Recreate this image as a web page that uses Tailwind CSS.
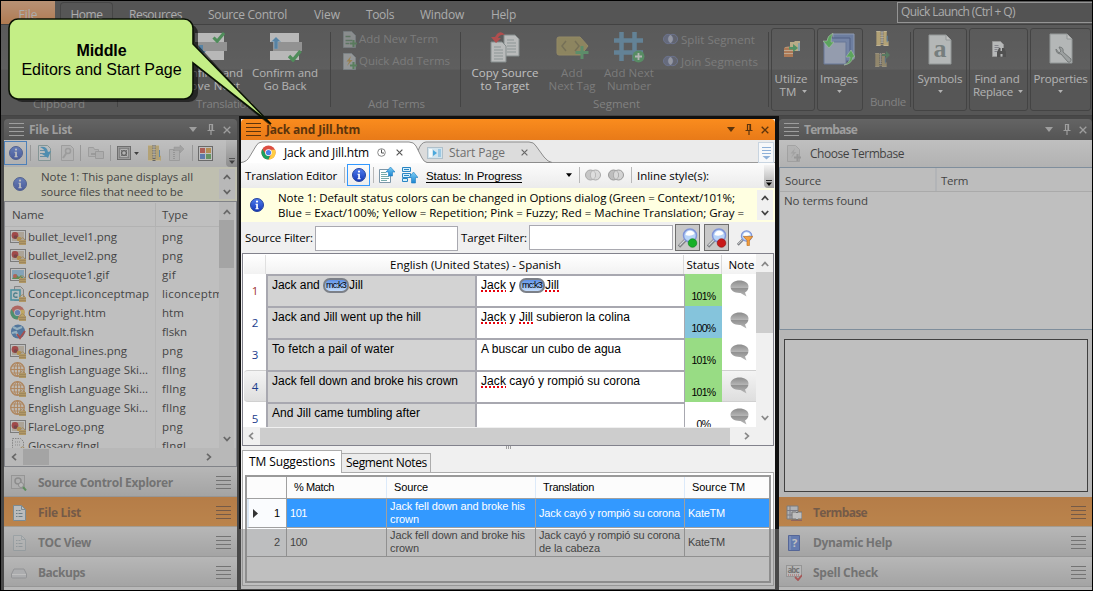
<!DOCTYPE html>
<html lang="en">
<head>
<meta charset="utf-8">
<title>Translation workspace</title>
<script src="https://cdn.jsdelivr.net/npm/@tailwindcss/browser@4"></script>
</head>
<body class="w-[1093px] h-[591px] overflow-hidden bg-[#101010] font-['Open_Sans',sans-serif] text-[11.5px] leading-[13px] text-black">

<svg class="absolute w-0 h-0">
  <defs>
    <linearGradient id="gBlue" x1="0" y1="0" x2="0" y2="1"><stop offset="0" stop-color="#4f7df0"/><stop offset="1" stop-color="#1436b4"/></linearGradient>
    <linearGradient id="gBub" x1="0" y1="0" x2="0" y2="1"><stop offset="0" stop-color="#8c8c8c"/><stop offset=".45" stop-color="#b4b4b4"/><stop offset=".5" stop-color="#929292"/><stop offset="1" stop-color="#b8b8b8"/></linearGradient>
    <linearGradient id="gSky" x1="0" y1="0" x2="0" y2="1"><stop offset="0" stop-color="#7fd0f7"/><stop offset="1" stop-color="#1b85d0"/></linearGradient>
  </defs>
  <symbol id="burger" viewBox="0 0 15 13"><path d="M0 .5h15M0 4.5h15M0 8.5h15M0 12.5h15" stroke="currentColor"/></symbol>
  <symbol id="caret" viewBox="0 0 8 5"><path d="M0 0h8L4 5z" fill="currentColor"/></symbol>
  <symbol id="pin" viewBox="0 0 8 11"><path d="M2.5 6V.5h3V6M5 .5V6M.5 6.5h7M4 7v4" fill="none" stroke="currentColor" stroke-width="1.2"/></symbol>
  <symbol id="x" viewBox="0 0 8 8"><path d="M.7.7l6.6 6.6M7.3.7L.7 7.3" stroke="currentColor" stroke-width="1.3"/></symbol>
  <symbol id="up" viewBox="0 0 8 6"><path d="M.8 5L4 1.6 7.2 5" fill="none" stroke="currentColor" stroke-width="1.7"/></symbol>
  <symbol id="down" viewBox="0 0 8 6"><path d="M.8 1L4 4.4 7.2 1" fill="none" stroke="currentColor" stroke-width="1.7"/></symbol>
  <symbol id="left" viewBox="0 0 6 8"><path d="M5 .8L1.6 4 5 7.2" fill="none" stroke="currentColor" stroke-width="1.7"/></symbol>
  <symbol id="right" viewBox="0 0 6 8"><path d="M1 .8L4.4 4 1 7.2" fill="none" stroke="currentColor" stroke-width="1.7"/></symbol>
  <symbol id="info" viewBox="0 0 14 14"><circle cx="7" cy="7" r="6.5" fill="url(#gBlue)" stroke="#27459c"/><circle cx="7" cy="3.6" r="1.1" fill="#fff"/><path d="M5.5 5.8h2.4v4.4h.8v1H5.4v-1h.8V6.8h-.7z" fill="#fff"/></symbol>
  <symbol id="over" viewBox="0 0 7 7"><path d="M0 .5h7" stroke="currentColor"/><path d="M0 3h7L3.5 7z" fill="currentColor"/></symbol>
  <symbol id="doc" viewBox="0 0 13 16"><path d="M.5.5h8l4 4v11H.5z" fill="#f4f8fa" stroke="#7796a6"/><path d="M8.500.5v4h4" fill="none" stroke="#7796a6"/><path d="M3 5.500h1.500M5.500 5.500h2M3 8.500h1.500M5.500 8.500h4M3 11.500h1.500M5.500 11.500h4" stroke="#5a7c8d"/></symbol>
  <symbol id="zip" viewBox="0 0 13 16"><path d="M0 0h11v10l2 1v5H0z" fill="#e7c46d"/><path d="M0 .5h11M0 15.500h12.500" stroke="#ffe9b0"/><path d="M6 0v16" stroke="#4c4c4c" stroke-width="3" stroke-dasharray="1.500 1"/><path d="M6 0v13" stroke="#eee" stroke-width="1"/><path d="M11.500 5v7" stroke="#3f8fd0"/></symbol>
  <symbol id="chrome" viewBox="0 0 16 16"><circle cx="8" cy="8" r="7.500" fill="#dd4f43"/><path d="M8 15.500A7.500 7.500 0 0 1 1.500 4.200L5 10a3.500 3.500 0 0 0 4.500 1z" fill="#1aa15f"/><path d="M8 15.500L11 10V5h4A7.500 7.500 0 0 1 8 15.500z" fill="#ffce44"/><circle cx="8" cy="8" r="3.600" fill="#fff"/><circle cx="8" cy="8" r="2.800" fill="#4a80e8"/></symbol>
  <symbol id="lock" viewBox="0 0 7 8"><path d="M1.500 3V2Q3.500-.5 5.500 2v1" fill="none" stroke="#c49a4a"/><rect y="3" width="7" height="5" fill="#e0b04c"/><path d="M0 4.500h7M0 6.500h7" stroke="#b08030" stroke-width=".7"/></symbol>
  <symbol id="img" viewBox="0 0 16 16"><rect x=".5" y="1.500" width="15" height="12" fill="#fff" stroke="#777"/><rect x="2" y="3" width="12" height="9" fill="#d8c8b0"/><circle cx="5" cy="6.500" r="3.400" fill="#c21414"/><circle cx="5.500" cy="8" r="1.800" fill="#6b1010"/><circle cx="9" cy="10" r="2.300" fill="#e8a01a"/><use href="#lock" x="9" y="8" width="7" height="8"/></symbol>
  <symbol id="gif" viewBox="0 0 16 16"><rect x=".5" y="1.500" width="15" height="12" fill="#fff" stroke="#777"/><rect x="2" y="3" width="12" height="9" fill="#8ac6f0"/><path d="M2 12l4-5 3 3 2-2 3 4z" fill="#3f9a28"/><circle cx="5" cy="9" r="2" fill="#e0442c"/><use href="#lock" x="9" y="8" width="7" height="8"/></symbol>
  <symbol id="concept" viewBox="0 0 16 16"><path d="M4.500.5h6l3 3v11h-9z" fill="#eee" stroke="#888"/><rect x="1" y="4" width="9" height="10" fill="#e8fbff" stroke="#1ca0bd" stroke-width="1.600"/><path d="M7.500 7.500Q4 6 3.700 9t3.800 2" fill="none" stroke="#147a92" stroke-width="1.300"/><use href="#lock" x="9" y="8" width="7" height="8"/></symbol>
  <symbol id="chromef" viewBox="0 0 16 16"><use href="#chrome" width="15" height="15"/><use href="#lock" x="9" y="8" width="7" height="8"/></symbol>
  <symbol id="skin" viewBox="0 0 16 16"><circle cx="8" cy="7.500" r="7" fill="#246cb8"/><path d="M3 3l4 2 5-2M2 9l4-1 2 4" stroke="#a8e0ff" stroke-width="2.200" fill="none"/><path d="M7 10l3 4 5-7" fill="none" stroke="#c81e1e" stroke-width="2"/></symbol>
  <symbol id="globe" viewBox="0 0 16 16"><circle cx="7.500" cy="7.500" r="6.800" fill="#fdf0e0" stroke="#dd8a3a" stroke-width="1.300"/><path d="M7.500 1v13M1 7.500h13M2 4h11M2 11h11" stroke="#dd8a3a" stroke-width=".9"/><ellipse cx="7.500" cy="7.500" rx="3.300" ry="6.600" fill="none" stroke="#dd8a3a" stroke-width=".9"/><use href="#lock" x="9" y="8" width="7" height="8"/></symbol>
  <symbol id="gloss" viewBox="0 0 16 16"><path d="M2.500.5h8l3 3v12h-11z" fill="#fafafa" stroke="#888" stroke-dasharray="1.500 1"/><path d="M5 4h5M5 7h5" stroke="#999" stroke-dasharray="1 1"/><use href="#lock" x="9" y="8" width="7" height="8"/></symbol>
  <symbol id="circ" viewBox="0 0 16 12"><circle cx="5.500" cy="6" r="5" fill="currentColor" fill-opacity=".6" stroke="currentColor"/><circle cx="10.500" cy="6" r="5" fill="currentColor" fill-opacity=".35" stroke="currentColor"/><path d="M8 1.700a5 5 0 0 1 0 8.600a5 5 0 0 1 0-8.600" fill="#fff" fill-opacity=".5"/></symbol>
  <symbol id="safe" viewBox="0 0 15 15"><rect x=".5" y=".5" width="14" height="14" fill="#bbb" stroke="#555"/><rect x="2.500" y="2.500" width="10" height="10" fill="#e6e6e6" stroke="#777"/><circle cx="7.500" cy="7.500" r="2.600" fill="none" stroke="#444" stroke-width="1.400"/><path d="M4 4l2 2M11 4L9 6M4 11l2-2M11 11L9 9" stroke="#555"/></symbol>
  <symbol id="lens" viewBox="0 0 20 20"><path d="M1 18.500l7-7" stroke="#7e8084" stroke-width="3.200"/><path d="M1.500 17.500l6-6" stroke="#d8dade" stroke-width="1.200"/><circle cx="12" cy="7.500" r="6.500" fill="#b8d4f8" stroke="#8095d8" stroke-width="1.500"/><path d="M7.500 7Q12 9 16.500 6Q15.500 2.800 12 2.800T7.500 7" fill="#fff"/></symbol>
  <symbol id="bubble" viewBox="0 0 19 17"><path d="M9.500.5C14.500.5 18.500 3 18.500 6.500 18.500 9.500 17 11.500 15 12.500L16.500 16.500 10.500 13C4.500 13.300.5 10.500.5 6.800S4.500.5 9.500.5z" fill="url(#gBub)"/></symbol>
  <symbol id="check" viewBox="0 0 14 12"><path d="M1 6l4 4L12.500 1" fill="none" stroke="#1e9a35" stroke-width="3.400"/></symbol>
  <symbol id="arr" viewBox="0 0 10 13"><path d="M5 0l5 5H7v8H3V5H0z" fill="#2f86c8" stroke="#8fc8f0" stroke-width=".6"/></symbol>
  <symbol id="plus" viewBox="0 0 8 8"><path d="M4 0v8M0 4h8" stroke="#2f9c3c" stroke-width="2.400"/></symbol>
  <symbol id="term" viewBox="0 0 15 17"><path d="M.5.500h8l4 4v12H.5z" fill="#d4dde0" stroke="#8fa3ab"/><path d="M2.500 5.500h5M2.500 9.500h7M2.500 12.500h4" stroke="#3d8c4c" stroke-width="1.300"/><use href="#plus" x="7" y="9" width="7" height="7"/></symbol>
  <symbol id="bolt" viewBox="0 0 15 17"><path d="M.5.500h8l4 4v12H.5z" fill="#d4dde0" stroke="#8fa3ab"/><path d="M8 3L3.500 8.500h2.700L4 13l5.500-6H6.800z" fill="#e0a01c"/><use href="#plus" x="7" y="9" width="7" height="7"/></symbol>
</svg>

<div class="relative w-[1093px] h-[591px] flex flex-col">

  <!-- menu tabs -->
  <div class="h-[25px] pt-px pl-px flex bg-[#2a2a2a] border-b border-[#050505] text-[#d8d8d8] text-[12px]">
    <div class="w-[54px] h-[23px] bg-gradient-to-b from-[#f0a468] to-[#e07520] flex justify-center pt-[7px] leading-[13px]"><span data-w="19">File</span></div>
    <div class="ml-[5px] mt-px w-[53px] h-[23px] border border-b-0 border-[#0c0c0c] rounded-t-sm bg-[#2d2d2d] pt-[5px] text-center"><span data-w="32">Home</span></div>
    <div class="pt-[7px] pl-[16px] flex leading-[13px]">
      <span class="w-[79px]"><span data-w="53">Resources</span></span>
      <span class="w-[106px]"><span data-w="79">Source Control</span></span>
      <span class="w-[52px]"><span data-w="26">View</span></span>
      <span class="w-[54px]"><span data-w="28">Tools</span></span>
      <span class="w-[71px]"><span data-w="44">Window</span></span>
      <span><span data-w="25">Help</span></span>
    </div>
    <div class="ml-auto mt-px w-[196px] h-[21px] border border-[#a8a8a8] bg-[#262626] pl-[3px] pt-[2px]"><span data-w="114">Quick Launch (Ctrl + Q)</span></div>
  </div>

  <!-- ribbon -->
  <div class="h-[91px] pl-px pr-[2px] flex bg-gradient-to-b from-[#343434] from-0% via-[#3e3e3e] via-49% to-[#2c2c2c] to-50% border-b border-[#080808] text-[#e4e4e4]">
    <div class="w-[117px] h-[75px] mt-[7px] border-r border-[#080808] text-center text-[#838383] pt-[65px]"><span data-w="52">Clipboard</span></div>
    <div class="w-[213px] h-[83px] mt-[7px] relative flex flex-col">
      <div class="flex h-[65px] pl-[59px] gap-[9px] text-center">
        <div class="w-[66px] flex flex-col items-center">
          <svg class="w-[33px] h-[31px] mb-[3px]" viewBox="0 0 33 31"><path d="M1 1h29v9H1zM1 19h29v9H1z" fill="#f0f0f0"/><path d="M4 10h29v9H4z" fill="#a4a4a4"/><use href="#check" x="18" y="0" width="14" height="11"/><path d="M5 13h4v6h3l-5 5-5-5h3z" fill="#2f86c8"/></svg>
          <span data-w="66">Confirm and</span><span data-w="60">Move Next</span>
        </div>
        <div class="w-[66px] flex flex-col items-center">
          <svg class="w-[33px] h-[31px] mb-[3px]" viewBox="0 0 33 31"><path d="M1 1h29v9H1zM1 19h29v9H1z" fill="#f0f0f0"/><path d="M4 10h29v9H4z" fill="#a4a4a4"/><use href="#check" x="19" y="18" width="14" height="12"/><use href="#arr" x="2" y="5" width="10" height="12"/></svg>
          <span data-w="66">Confirm and</span><span data-w="43">Go Back</span>
        </div>
      </div>
      <div class="pl-[78px] text-[#838383]"><span data-w="57">Translation</span></div>
      <div class="absolute right-0 top-0 w-px h-[75px] bg-[#080808]"></div>
    </div>
    <div class="w-[130px] h-[75px] mt-[7px] border-r border-[#080808] pl-[12px] text-[#777]">
      <div class="flex h-[22px] gap-[1px]"><svg class="w-[15px] h-[17px] opacity-60 -mt-px"><use href="#term"/></svg><span><span data-w="79">Add New Term</span></span></div>
      <div class="flex h-[43px] gap-[1px]"><svg class="w-[15px] h-[17px] opacity-70 -mt-px"><use href="#bolt"/></svg><span><span data-w="91">Quick Add Terms</span></span></div>
      <div class="pl-[25px] text-[#838383]"><span data-w="57">Add Terms</span></div>
    </div>
    <div class="w-[308px] h-[75px] mt-[7px] border-r border-[#080808]">
      <div class="flex h-[66px] -mt-px text-[#787878]">
        <div class="ml-[8px] w-[72px] flex flex-col items-center text-white">
          <svg class="w-[30px] h-[32px] mb-[3px]" viewBox="0 0 30 32"><path d="M14 4h11l4 4v17H14z" fill="#f2f6f6" stroke="#8a9a9a"/><path d="M17 9h7M17 12h9M17 15h9M17 18h9M17 21h9" stroke="#9aa"/><path d="M1 11h11l4 4v16H1z" fill="#f2f6f6" stroke="#8a9a9a"/><path d="M4 16h7M4 19h9M4 22h9M4 25h9M4 28h9" stroke="#9aa"/><path d="M15 4Q11-1 7 3L5 6H1l5 6 5-5H8Q10 3 15 4z" fill="#e01c1c"/></svg>
          <span data-w="67">Copy Source</span><span data-w="49">to Target</span>
        </div>
        <div class="ml-[3px] w-[54px] flex flex-col items-center pl-[2px]">
          <svg class="w-[33px] h-[32px] mb-[3px]" viewBox="0 0 33 32"><path d="M1 8q0-2 2-2h21l8 9-7 9H3q-2 0-2-2z" fill="#9a8a40" stroke="#a8944a"/><path d="M10 10l-4 5 4 5M19 10l4 5-4 5" fill="none" stroke="#6c612f" stroke-width="1.500"/><path d="M26 15v13M19.500 21.500h13" stroke="#3a9a54" stroke-width="3"/></svg>
          <span data-w="22">Add</span><span data-w="47">Next Tag</span>
        </div>
        <div class="ml-[2px] w-[58px] flex flex-col items-center">
          <svg class="w-[34px] h-[32px] mb-[3px]" viewBox="0 0 34 32"><path d="M9.500 1v29M22.500 1v29M2 9.500h29M2 21.500h29" stroke="#4684ac" stroke-width="4.500"/><circle cx="26.500" cy="25.500" r="6" fill="#2f9848"/><path d="M26.500 22v7M23 25.500h7" stroke="#e8e8e8" stroke-width="1.800"/></svg>
          <span data-w="50">Add Next</span><span data-w="44">Number</span>
        </div>
        <div class="ml-[5px] flex flex-col gap-[10px] pt-[2px]">
          <div class="flex items-center gap-[3px] h-[12px]"><svg class="w-[15px] h-[12px] text-[#5868a0]"><use href="#circ"/></svg><span data-w="74">Split Segment</span></div>
          <div class="flex items-center gap-[3px] h-[12px]"><svg class="w-[15px] h-[12px] text-[#5868a0]"><use href="#circ"/></svg><span data-w="77">Join Segments</span></div>
        </div>
      </div>
      <div class="pl-[132px] text-[#838383]"><span data-w="47">Segment</span></div>
    </div>
    <div class="flex mt-[3px] ml-[2px] h-[83px] gap-[2px]">
      <div class="w-[44px] border border-[#080808] rounded-[3px] flex flex-col items-center pr-[4px]">
        <svg class="w-[17px] h-[17px] mt-[12px] mb-[14px] ml-[2px]" viewBox="0 0 17 17"><path d="M6 1h4l1-1h5v10H6z" fill="#f0d68e"/><path d="M14 2h2v8h-2z" fill="#8fc1d0"/><ellipse cx="4.500" cy="7" rx="4" ry="1.500" fill="#f2a460"/><path d="M0 7h9v9H0z" fill="#d8722c"/><path d="M0 9.500h9M0 12.500h9" stroke="#ffd0a0"/><path d="M5 6h4V3l5 4-5 4V8.500H5z" fill="#22a34a"/></svg>
        <span data-w="33">Utilize</span><span class="ml-[4px] flex items-center gap-[5px]"><span data-w="17">TM</span><svg class="w-[5px] h-[3px]"><use href="#caret"/></svg></span>
      </div>
      <div class="w-[46px] border border-[#080808] rounded-[3px] flex flex-col items-center pr-[2px]">
        <svg class="w-[32px] h-[33px] mt-[4px] mb-[6px]" viewBox="0 0 32 33"><path d="M10 1h21v25H10z" fill="#5a7cc0" stroke="#9bb4e4"/><path d="M5 5h22v23H5z" fill="#6a8acc" stroke="#24408a"/><path d="M1 9h22v22H1z" fill="#a8b8dc" stroke="#5070b0"/><path d="M10 0Q4 3 4 8H0l6 7 5-6H8Q8 4 10 0zM21 32q6-2 6-8h-4l5-7 4 7h-2q-1 7-9 8z" fill="#36c83a" stroke="#d8f8d8" stroke-width=".6"/></svg>
        <span data-w="38">Images</span><svg class="w-[5px] h-[3px] mt-[5px]"><use href="#caret"/></svg>
      </div>
      <div class="w-[46px] h-[80px] flex flex-col pl-[5px]">
        <svg class="ml-[6px] w-[13px] h-[16px] mt-[3px]"><use href="#zip"/></svg>
        <svg class="ml-[4px] w-[16px] h-[17px] mt-[5px] opacity-60" viewBox="0 0 16 16"><use href="#zip" x="1" y="2" width="12" height="14"/><path d="M8 3h4V0l4 4-4 4V5H8z" fill="#2b9a48"/></svg>
        <span class="mt-[28px] text-[#838383]"><span data-w="36">Bundle</span></span>
      </div>
      <div class="relative w-[54px] border border-[#080808] rounded-[3px] flex flex-col items-center">
        <div class="absolute -left-[4px] top-[3px] w-px h-[75px] bg-[#080808]"></div>
        <svg class="w-[24px] h-[31px] mt-[5px] mb-[7px]" viewBox="0 0 24 31"><path d="M1 1h17l5 5v24H1z" fill="#e8eeee" stroke="#a6b0b0"/><path d="M18 1v5h5" fill="#fff" stroke="#a6b0b0"/><text x="5.500" y="23" font-family="Liberation Serif,serif" font-size="26" font-weight="bold" fill="#6c7c7c" textLength="13">a</text></svg>
        <span data-w="45">Symbols</span><svg class="w-[5px] h-[3px] mt-[5px]"><use href="#caret"/></svg>
      </div>
      <div class="w-[59px] border border-[#080808] rounded-[3px] flex flex-col items-center pr-[3px]">
        <svg class="w-[14px] h-[17px] mt-[12px] mb-[14px] ml-[4px]" viewBox="0 0 14 17"><path d="M.5.500h8l3 3v12H.5z" fill="#eef2f2" stroke="#aaa"/><path d="M2.500 4.500h4M2.500 6.500h5M2.500 8.500h3M2.500 10.500h3" stroke="#889"/><path d="M5 16v-5l2-4h1.500v3h1.500V7h2l2 4v5h-3.500v-3H8.500v3z" fill="#222"/></svg>
        <span data-w="45">Find and</span><span class="ml-[2px] flex items-center gap-[5px]"><span data-w="40">Replace</span><svg class="w-[5px] h-[3px]"><use href="#caret"/></svg></span>
      </div>
      <div class="w-[61px] border border-[#080808] rounded-[3px] flex flex-col items-center">
        <svg class="w-[24px] h-[31px] mt-[4px] mb-[8px]" viewBox="0 0 24 31"><path d="M1 1h17l5 5v24H1z" fill="#e8eeee" stroke="#a6b0b0"/><path d="M18 1v5h5" fill="#fff" stroke="#a6b0b0"/><path d="M7 16q0 5 5 5l7 8q3 1 3-3l-8-7q1-5-4-5l2 4-2 2z" fill="#b8c0c0" stroke="#6c7474"/></svg>
        <span data-w="54">Properties</span><svg class="w-[5px] h-[3px] mt-[5px]"><use href="#caret"/></svg>
      </div>
    </div>
  </div>

  <!-- workspace -->
  <div class="flex h-[475px] pt-[3px] pl-[4px]">

    <!-- file list -->
    <div class="w-[233px] h-[470px] flex flex-col">
      <div class="h-[21px] rounded-t-[4px] bg-gradient-to-b from-[#494949] to-[#2a2a2a] flex items-center pl-[5px] pr-[6px] text-[#bdbdbd] shrink-0">
        <svg class="w-[15px] h-[13px]"><use href="#burger"/></svg><b class="ml-[5px] text-[12px]"><span data-w="43">File List</span></b>
        <svg class="ml-auto w-[8px] h-[5px]"><use href="#caret"/></svg><svg class="ml-[10px] w-[8px] h-[11px]"><use href="#pin"/></svg><svg class="ml-[8px] w-[8px] h-[8px]"><use href="#x"/></svg>
      </div>
      <div class="h-[27px] bg-gradient-to-b from-white to-[#dedede] flex items-center pb-px shrink-0">
        <div class="w-[23px] h-[24px] border border-[#1a80f0] flex items-center justify-center"><svg class="w-[14px] h-[14px]"><use href="#info"/></svg></div>
        <i class="ml-[3px] w-px h-[16px] bg-[#b0b0b0]"></i>
        <svg class="ml-[7px] w-[14px] h-[16px]" viewBox="0 0 14 16"><path d="M.5.5h9l3 3v12H.5z" fill="#f4f8fa" stroke="#8aa"/><path d="M2 5.500h6M2 8.500h8M2 11.500h8" stroke="#4a9ac8"/><path d="M2 2q7-1 8 5l3-1-3 7-6-4 3-1Q7 4 2 2z" fill="#1f9ae0"/></svg>
        <svg class="ml-[9px] w-[13px] h-[16px]" viewBox="0 0 13 16"><path d="M.5.500h9l3 3v12H.5z" fill="#e6e6e6" stroke="#bbb"/><circle cx="7" cy="6" r="2.500" fill="none" stroke="#b8b8b8" stroke-width="1.500"/><path d="M5.500 8L2 13" stroke="#b8b8b8" stroke-width="2"/></svg>
        <i class="ml-[6px] w-px h-[16px] bg-[#b0b0b0]"></i>
        <svg class="ml-[7px] w-[16px] h-[14px]" viewBox="0 0 16 14"><path d="M.5 1.500h5l1 2h4v7H.5z" fill="#e0e0e0" stroke="#bbb"/><path d="M7.500 5.500h8v7h-8z" fill="#dadada" stroke="#b4b4b4"/><path d="M3 8h5" stroke="#aaa" stroke-width="1.500"/></svg>
        <i class="ml-[6px] w-px h-[16px] bg-[#b0b0b0]"></i>
        <svg class="ml-[6px] w-[14px] h-[14px]"><use href="#safe"/></svg>
        <svg class="ml-[3px] w-[5px] h-[3px]"><use href="#caret"/></svg>
        <svg class="ml-[9px] w-[13px] h-[16px]"><use href="#zip"/></svg>
        <svg class="ml-[8px] w-[16px] h-[16px]" viewBox="0 0 16 16"><path d="M.5 4.500h10v11H.5z" fill="#dcdcdc" stroke="#b8b8b8"/><path d="M5 5v10" stroke="#aaa" stroke-width="2" stroke-dasharray="1 1"/><path d="M5 2h6V0l4 4-4 4V5.500H5z" fill="#c4c4c4" stroke="#aaa" stroke-width=".5"/></svg>
        <i class="ml-[7px] w-px h-[16px] bg-[#b0b0b0]"></i>
        <svg class="ml-[5px] w-[15px] h-[15px]" viewBox="0 0 15 15"><rect x=".5" y=".5" width="14" height="14" fill="#fff" stroke="#555"/><path d="M2 2h5v5H2z" fill="#d83a2c"/><path d="M8 2h5v5H8z" fill="#e49a28"/><path d="M2 8h5v5H2z" fill="#3c74d8"/><path d="M8 8h5v5H8z" fill="#4aa844"/></svg>
        <div class="ml-auto w-[11px] h-[27px] mt-px bg-gradient-to-b from-[#f0f0f0] to-[#9a9a9a] rounded-bl flex items-end justify-center pb-[3px]"><svg class="w-[6px] h-[6px]"><use href="#over"/></svg></div>
      </div>
      <div class="h-[34px] bg-[#ffffe1] flex items-center shrink-0">
        <svg class="ml-[9px] w-[14px] h-[14px]"><use href="#info"/></svg>
        <div class="ml-[14px] leading-[15px]"><div><span data-w="152">Note 1: This pane displays all</span></div><div><span data-w="142">source files that need to be</span></div></div>
        <div class="ml-auto mr-[2px] w-[16px] h-[30px] bg-[#f0f0f0] flex flex-col items-center justify-around text-[#444]"><svg class="w-[8px] h-[6px]"><use href="#up"/></svg><svg class="w-[8px] h-[6px]"><use href="#down"/></svg></div>
      </div>
      <div class="h-[266px] border border-[#828790] bg-white flex flex-col shrink-0">
        <div class="flex h-[246px]">
          <div class="w-[214px] overflow-hidden">
            <div class="h-[24px] mt-px border-b border-[#e4e4e4] flex items-center leading-[23px]"><span class="w-[151px] h-full pl-[7px] border-r border-[#e4e4e4]"><span data-w="32">Name</span></span><span class="pl-[6px]"><span data-w="26">Type</span></span></div>
            <div id="files"></div>
          </div>
          <div class="w-[15px] bg-[#f0f0f0] flex flex-col items-center text-[#505050]"><svg class="mt-[7px] w-[8px] h-[6px]"><use href="#up"/></svg><div class="mt-[5px] w-[15px] h-[48px] bg-[#c8c8c8]"></div><svg class="mt-auto mb-[6px] w-[8px] h-[6px]"><use href="#down"/></svg></div>
        </div>
        <div class="grow bg-[#f0f0f0] flex items-center pb-px text-[#505050]"><svg class="ml-[6px] w-[6px] h-[8px]"><use href="#left"/></svg><div class="ml-[6px] w-[26px] h-[16px] bg-[#c8c8c8]"></div><svg class="ml-[157px] w-[6px] h-[8px]"><use href="#right"/></svg></div>
      </div>
      <div id="accL"></div>
    </div>

    <!-- editor -->
    <div class="ml-[4px] w-[534px] h-[470px] flex flex-col bg-[#f0f0f0]">
      <div class="h-[21px] rounded-t-[4px] bg-gradient-to-b from-[#fa8c1e] to-[#e87a18] flex items-center pl-[5px] pr-[6px] text-[#5c340c] shrink-0">
        <svg class="w-[15px] h-[13px]"><use href="#burger"/></svg><b class="ml-[5px] text-[12px]"><span data-w="94">Jack and Jill.htm</span></b>
        <svg class="ml-auto w-[8px] h-[5px]"><use href="#caret"/></svg><svg class="ml-[10px] w-[8px] h-[11px]"><use href="#pin"/></svg><svg class="ml-[8px] w-[8px] h-[8px]"><use href="#x"/></svg>
      </div>
      <div class="relative h-[23px] shrink-0 bg-[#ebebeb]">
        <svg class="absolute inset-0 w-[534px] h-[23px]" viewBox="0 0 534 23"><path d="M0 22.500h534" stroke="#9a9a9a"/><path d="M177 11q3-9 8-9h103q5 0 7 4l8 11q4 5 8 5.500H181z" fill="#dcdcdc" stroke="#8c8c8c"/><path d="M0 22.500Q6 22 9 16l6-10q2-4 6-4h147q5 0 7 4l6 12q2 4 5 4.500V24H0z" fill="#fff"/><path d="M0 22.500Q6 22 9 16l6-10q2-4 6-4h147q5 0 7 4l6 12q2 4 5 4.500" fill="none" stroke="#8c8c8c"/></svg>
        <div class="relative h-full flex items-center pl-[20px] pt-[2px]">
          <svg class="w-[15px] h-[15px]"><use href="#chrome"/></svg><span class="ml-[8px] text-[12px]"><span data-w="85">Jack and Jill.htm</span></span>
          <svg class="ml-[8px] w-[9px] h-[9px]" viewBox="0 0 9 9"><circle cx="4.500" cy="4.500" r="3.800" fill="#fff" stroke="#888"/><path d="M4.500 1.500v3.500h2.500" fill="none" stroke="#555"/></svg>
          <svg class="ml-[10px] w-[7px] h-[7px] text-[#555]"><use href="#x"/></svg>
          <svg class="ml-[24px] w-[16px] h-[12px]" viewBox="0 0 16 12"><rect x=".5" y=".5" width="15" height="11" fill="#d2e4ee" stroke="#b0c0ca"/><path d="M2 2h3v8H2z" fill="#f4fafc"/><path d="M6 3l4 3-4 3z" fill="#4aa8dc"/><path d="M11 2h3v8h-3z" fill="#9cc8e2"/></svg>
          <span class="ml-[6px] text-[12px] text-[#6e6e6e]"><span data-w="56">Start Page</span></span>
          <svg class="ml-[16px] w-[7px] h-[7px] text-[#666]"><use href="#x"/></svg>
          <div class="ml-auto mr-px w-[16px] h-[21px] -mt-px border border-[#c8d4e0] bg-[#f6f8fa] flex justify-center pt-[4px]"><svg class="w-[9px] h-[13px]" viewBox="0 0 9 13"><path d="M0 .5h9M0 3.500h9M0 6.500h9" stroke="#8db0d8"/><path d="M.5 9h8l-4 3.500z" fill="#8db0d8"/></svg></div>
        </div>
      </div>
      <div class="h-[25px] shrink-0 bg-gradient-to-b from-[#fcfcfc] to-[#ebebeb] flex items-center pb-px">
        <span class="ml-[4px]"><span data-w="92">Translation Editor</span></span>
        <i class="ml-[7px] w-px h-[16px] bg-[#b8b8b8]"></i>
        <div class="ml-[2px] w-[23px] h-[22px] border border-[#3399ff] flex items-center justify-center"><svg class="w-[14px] h-[14px]"><use href="#info"/></svg></div>
        <i class="ml-[3px] w-px h-[16px] bg-[#b8b8b8]"></i>
        <svg class="ml-[5px] w-[16px] h-[16px]" viewBox="0 0 16 16"><path d="M.5 2.500h11v13H.5z" fill="#fff" stroke="#7d96a8"/><path d="M2 5.500h5M2 7.500h6M2 9.500h8M2 11.500h8M2 13.500h6" stroke="#7aa"/><path d="M11.500 0l4.500 5h-2.500v4h-4V5H7z" fill="url(#gSky)" stroke="#1f7cc0" stroke-width=".6"/></svg>
        <svg class="ml-[7px] w-[16px] h-[17px]" viewBox="0 0 16 17"><path d="M.5.500h8v4h-8zM.5 6.500h8v4h-8zM.5 11.500h5v3h-5z" fill="#d4f0fc" stroke="#2a86c4"/><path d="M2 2.500h5M2 8.500h5" stroke="#2a86c4"/><path d="M11.500 5l4.500 5.500h-2.500V16h-4v-5.500H7z" fill="url(#gSky)" stroke="#1f7cc0" stroke-width=".6"/></svg>
        <span class="ml-[8px] mt-[2px] w-[96px] h-[13px] border-b border-black font-['Liberation_Sans',sans-serif] leading-[12px] text-[11.5px]"><span data-w="96">Status: In Progress</span></span>
        <svg class="ml-[44px] w-[6px] h-[4px]"><use href="#caret"/></svg>
        <i class="ml-[7px] w-px h-[16px] bg-[#b8b8b8]"></i>
        <svg class="ml-[5px] w-[16px] h-[12px] text-[#a8a8a8]"><use href="#circ"/></svg>
        <svg class="ml-[7px] w-[16px] h-[12px] text-[#999]"><use href="#circ"/></svg>
        <i class="ml-[7px] w-px h-[16px] bg-[#b8b8b8]"></i>
        <span class="ml-[5px]"><span data-w="72">Inline style(s):</span></span>
        <div class="ml-auto mr-px mt-[2px] w-[10px] h-[23px] bg-gradient-to-b from-[#f4f4f4] to-[#a6a6a6] rounded-bl flex items-end justify-center pb-[2px]"><svg class="w-[6px] h-[6px]"><use href="#over"/></svg></div>
      </div>
      <div class="h-[34px] shrink-0 bg-[#ffffe1] flex items-center">
        <svg class="ml-[9px] w-[14px] h-[14px]"><use href="#info"/></svg>
        <div class="ml-[14px] leading-[15px]"><div><span data-w="457">Note 1: Default status colors can be changed in Options dialog (Green = Context/101%;</span></div><div><span data-w="466">Blue = Exact/100%; Yellow = Repetition; Pink = Fuzzy; Red = Machine Translation; Gray =</span></div></div>
        <div class="ml-auto mr-[2px] w-[16px] h-[30px] bg-[#f0f0f0] flex flex-col items-center justify-around text-[#444]"><svg class="w-[8px] h-[6px]"><use href="#up"/></svg><svg class="w-[8px] h-[6px]"><use href="#down"/></svg></div>
      </div>
      <div class="h-[31px] shrink-0 flex items-center">
        <span class="ml-[4px] -mt-px"><span data-w="68">Source Filter:</span></span>
        <div class="ml-[2px] w-[143px] h-[25px] bg-white border border-[#a9a9b0] mt-px"></div>
        <span class="ml-[3px] -mt-px"><span data-w="66">Target Filter:</span></span>
        <div class="ml-[2px] w-[144px] h-[25px] bg-white border border-[#a9a9b0]"></div>
        <div class="ml-[2px] w-[25px] h-[27px] bg-[#c8c8c8] border border-[#6e6e6e] flex items-center justify-center"><svg class="w-[20px] h-[20px]" viewBox="0 0 20 20"><use href="#lens" width="20" height="20"/><circle cx="14.500" cy="15" r="4.300" fill="#16b028" stroke="#0a7a18" stroke-width=".6"/></svg></div>
        <div class="ml-[4px] w-[25px] h-[27px] bg-[#c8c8c8] border border-[#6e6e6e] flex items-center justify-center"><svg class="w-[20px] h-[20px]" viewBox="0 0 20 20"><use href="#lens" width="20" height="20"/><circle cx="14.500" cy="15" r="4.300" fill="#c81818" stroke="#8a0a0a" stroke-width=".6"/></svg></div>
        <svg class="ml-[8px] w-[16px] h-[16px]" viewBox="0 0 20 20"><use href="#lens" width="20" height="20"/><path d="M8 8h12l-4.500 5v6.500h-3V13z" fill="#f6a040" stroke="#b86a18" stroke-width=".8"/></svg>
      </div>

      <!-- segment grid -->
      <div class="ml-px w-[532px] h-[193px] shrink-0 border border-[#82828c] bg-white flex flex-col">
        <div class="flex h-[173px]">
          <div class="ml-px w-[512px] overflow-hidden">
            <div class="h-[19px] mt-px flex bg-gradient-to-b from-white to-[#f2f2f2] text-center leading-[19px]">
              <span class="w-[22px] border-r border-[#e0e0e0]"></span><span class="w-[418px] pl-[2px] border-r border-[#dadada]"><span data-w="171">English (United States) - Spanish</span></span><span class="w-[38px] pl-px border-r border-[#dadada]"><span data-w="33">Status</span></span><span class="w-[34px] pl-[5px]"><span data-w="26">Note</span></span>
            </div>
            <div id="segs"></div>
          </div>
          <div class="ml-auto w-[17px] bg-[#f0f0f0] flex flex-col items-center text-[#888]"><svg class="mt-[7px] w-[8px] h-[6px]"><use href="#up"/></svg><div class="mt-[5px] w-[17px] h-[61px] bg-[#cdcdcd]"></div><svg class="mt-auto mb-[6px] w-[8px] h-[6px]"><use href="#down"/></svg></div>
        </div>
        <div class="grow bg-[#f0f0f0] flex items-center text-[#888]"><svg class="ml-[5px] w-[6px] h-[8px]"><use href="#left"/></svg><div class="ml-[6px] w-[470px] h-[17px] bg-[#cdcdcd]"></div><svg class="ml-[14px] w-[6px] h-[8px]"><use href="#right"/></svg></div>
      </div>
      <div class="h-[4px] shrink-0 flex justify-center gap-px"><i class="w-px h-[3px] bg-[#a0a0a0]"></i><i class="w-px h-[3px] bg-[#a0a0a0]"></i><i class="w-px h-[3px] bg-[#a0a0a0]"></i></div>

      <!-- suggestions -->
      <div class="pl-px h-[22px] shrink-0 flex items-end text-[12px]">
        <div class="w-[100px] h-[23px] -mb-px z-10 bg-white border border-b-0 border-[#acacac] pl-[6px] pt-[4px]"><span data-w="86">TM Suggestions</span></div>
        <div class="w-[89px] h-[19px] bg-[#ececec] border border-b-0 border-l-0 border-[#acacac] pl-[4px] pt-[2px]"><span data-w="81">Segment Notes</span></div>
      </div>
      <div class="ml-px w-[532px] h-[114px] shrink-0 border border-[#acacac] bg-white p-[2px]">
        <div class="h-[108px] border-2 border-[#9a9a9a] font-['Liberation_Sans',sans-serif] text-[11px]">
          <div class="flex h-[22px] bg-[#fcfcfc] leading-[21px] border-b border-[#a0a0a0]">
            <span class="w-[40px] border-r border-[#a0a0a0]"></span><span class="w-[100px] pl-[7px] border-r border-[#dceafa]"><span data-w="40">% Match</span></span><span class="w-[149px] pl-[7px] border-r border-[#dceafa]"><span data-w="34">Source</span></span><span class="w-[149px] pl-[7px] border-r border-[#dceafa]"><span data-w="51">Translation</span></span><span class="pl-[7px]"><span data-w="53">Source TM</span></span>
          </div>
          <div id="sugg"></div>
        </div>
      </div>
    </div>

    <!-- termbase -->
    <div class="ml-[4px] w-[313px] h-[470px] flex flex-col">
      <div class="h-[21px] rounded-t-[4px] bg-gradient-to-b from-[#494949] to-[#2a2a2a] flex items-center pl-[5px] pr-[5px] text-[#bdbdbd] shrink-0">
        <svg class="w-[15px] h-[13px]"><use href="#burger"/></svg><b class="ml-[5px] text-[12px]"><span data-w="53">Termbase</span></b>
        <svg class="ml-auto w-[8px] h-[5px]"><use href="#caret"/></svg><svg class="ml-[10px] w-[8px] h-[11px]"><use href="#pin"/></svg><svg class="ml-[8px] w-[8px] h-[8px]"><use href="#x"/></svg>
      </div>
      <div class="h-[27px] bg-gradient-to-b from-white to-[#e4e4e4] flex items-center pl-[8px] shrink-0">
        <svg class="w-[15px] h-[17px] grayscale opacity-55"><use href="#bolt"/></svg><span class="ml-[8px] text-[12px]"><span data-w="94">Choose Termbase</span></span>
      </div>
      <div class="h-[163px] border border-r-0 border-[#7f9db9] bg-white shrink-0">
        <div class="h-[24px] flex border-b border-[#d4d4d4] bg-[#fafafa] leading-[26px]"><span class="w-[157px] pl-[5px] border-r-2 border-[#e4e8ee]"><span data-w="36">Source</span></span><span class="pl-[4px]"><span data-w="27">Term</span></span></div>
        <div class="pl-[4px] pt-[2px]"><span data-w="84">No terms found</span></div>
      </div>
      <div class="h-[167px] bg-[#ececec] px-[5px] pt-[9px] shrink-0"><div class="w-[304px] h-[153px] bg-white border border-black"></div></div>
      <div id="accR"></div>
    </div>
  </div>

  <!-- veil over everything outside the highlighted region -->
  <div class="absolute inset-0 bg-[#808080]/50 [clip-path:polygon(0_0,1093px_0,1093px_116px,239px_116px,239px_529px,779px_529px,779px_116px,1093px_116px,1093px_591px,0_591px)]"></div>
  <div class="absolute inset-0 border border-black"></div>

  <!-- callout -->
  <svg class="absolute left-0 top-0 w-[290px] h-[135px]" viewBox="0 0 290 135">
    <path d="M20 24h169a9 9 0 0 1 9 9v12L273 128 198 67v26a9 9 0 0 1-9 9H22a9 9 0 0 1-9-9V33a9 9 0 0 1 7-9z" fill="#000" fill-opacity=".55"/>
    <path d="M18 19h166a9 9 0 0 1 9 9v16L271 124 193 63v27a9 9 0 0 1-9 9H18a9 9 0 0 1-9-9V28a9 9 0 0 1 9-9z" fill="#c4ee86" stroke="#0a1204" stroke-width="1.600"/>
  </svg>
  <div class="absolute left-[10px] top-[41px] w-[183px] text-center font-['Liberation_Sans',sans-serif] text-[16px] leading-[19px]"><b><span data-w="50">Middle</span></b><br><span data-w="160">Editors and Start Page</span></div>
</div>

<script>
const files=[['img','bullet_level1.png',89,'png',21],['img','bullet_level2.png',89,'png',21],['gif','closequote1.gif',81,'gif',14],['concept','Concept.liconceptmap',121,'liconceptmap',75],['chromef','Copyright.htm',78,'htm',22],['skin','Default.flskn',66,'flskn',25],['img','diagonal_lines.png',99,'png',21],['globe','English Language Ski...',120,'fllng',24],['globe','English Language Ski...',120,'fllng',24],['globe','English Language Ski...',120,'fllng',24],['img','FlareLogo.png',76,'png',21],['gloss','Glossary.flngl',71,'flngl',24]];
document.getElementById('files').innerHTML=files.map(f=>`<div class="h-[19px] flex items-center"><span class="w-[150px] flex items-center shrink-0"><svg class="ml-[5px] w-[16px] h-[16px]"><use href="#${f[0]}"/></svg><span class="ml-[2px]"><span data-w="${f[2]}">${f[1]}</span></span></span><span class="h-[19px] w-px bg-[#ececec] shrink-0"></span><span class="pl-[6px]"><span data-w="${f[4]}">${f[3]}</span></span></div>`).join('');

const ic={
 sce:'<rect x=".5" y=".5" width="13" height="13" fill="#ddd" stroke="#aaa"/><circle cx="7" cy="6" r="3" fill="none" stroke="#999" stroke-width="1.500"/><circle cx="10" cy="10" r="2.500" fill="#eee" stroke="#999"/><path d="M12 12l3 3.500" stroke="#3f9c3f" stroke-width="2"/>',
 doc:'<use href="#doc" x="2" width="13" height="16"/>',
 docd:'<g opacity=".4"><use href="#doc" x="2" width="13" height="16"/></g>',
 disk:'<path d="M3 4h10l2.500 5v3q0 1-1 1h-13q-1 0-1-1V9z" fill="#d8dade" stroke="#a4a6aa"/><path d="M1 9.500h14" stroke="#fff"/>',
 tb:'<path d="M1 1h11v13H1z" fill="#e0e4ea" stroke="#777"/><path d="M1 5.500h11M1 10h11M4 1v13" stroke="#778"/><path d="M6 7h4l1 1 1-1h4v7h-4l-1 1-1-1H6z" fill="#fff" stroke="#666"/><path d="M5 15.500h11" stroke="#a04a3a"/>',
 help:'<path d="M2.500.500h11v15h-11z" fill="#4a78e0" stroke="#2a4cae"/><path d="M4 1v14" stroke="#9ab8ff"/><text x="6" y="12" font-size="11" font-weight="bold" fill="#fff">?</text>',
 abc:'<rect x=".5" y=".5" width="15" height="11" fill="#eee" stroke="#aaa"/><text x="1.500" y="8" font-size="8" font-weight="bold" fill="#666" textLength="12">abc</text><path d="M2 10h12" stroke="#d04040" stroke-dasharray="1 1"/><path d="M9 12l3 3 4-5" fill="none" stroke="#cc3030" stroke-width="1.800"/>'};
const row=(i,t,w,on)=>`<div class="${on?'bg-gradient-to-b from-[#ea7a10] to-[#f68818] text-[#693410] border-b border-[#c8b8a0]':'bg-gradient-to-b from-[#eeeeee] to-[#c8c8c8] text-[#666] border-b border-[#acacac]'} h-[30px] flex items-center pt-[2px] pl-[7px] pr-[6px]"><svg class="w-[16px] h-[16px]" viewBox="0 0 16 16">${ic[i]}</svg><b class="ml-[11px] text-[12px]"><span data-w="${w}">${t}</span></b><svg class="ml-auto w-[15px] h-[13px]"><use href="#burger"/></svg></div>`;
document.getElementById('accL').innerHTML=row('sce','Source Control Explorer',135)+row('doc','File List',43,1)+row('docd','TOC View',53)+row('disk','Backups',47)+'<div class="h-[3px] bg-[#f0f0f0]"></div>';
document.getElementById('accR').innerHTML=row('tb','Termbase',54,1)+row('help','Dynamic Help',79)+row('abc','Spell Check',65)+'<div class="h-[3px] bg-[#f0f0f0]"></div>';

const tag='<span class="inline-block align-top w-[26px] h-[15px] -mt-px -mb-[3px] rounded-[7px] border-2 border-[#7c8088] bg-gradient-to-b from-[#5f92e8] to-[#c4dcfa] text-[9px] leading-[11px] text-center"><span data-w="20">mc:k3</span></span>';
const w=s=>`<u class="decoration-dotted decoration-red-600 decoration-[1.5px] underline-offset-1">${s}</u>`;
const T=(t,n)=>`<span data-w="${n}">${t}</span>`;
const segs=[[T('Jack and ',51)+tag+T('Jill',14),w(T('Jack',25))+T(' y ',13)+tag+w(T('Jill',14)),'101%','g','text-[#a03030]'],
[T('Jack and Jill went up the hill',149),w(T('Jack',25))+T(' y ',13)+w(T('Jill',14))+T(' subieron la colina',97),'100%','b','text-[#1a3c8c]'],
[T('To fetch a pail of water',122),T('A buscar un cubo de agua',140),'101%','g','text-[#1a3c8c]'],
[T('Jack fell down and broke his crown',186),w(T('Jack',25))+T(' cayó y rompió su corona',134),'101%','g','text-[#1a3c8c]'],
[T('And Jill came tumbling after',148),'','0%','w','text-[#1a3c8c]']];
const sc={g:'bg-[#98dc84]',b:'bg-[#85c4dc]',w:'bg-white'};
document.getElementById('segs').innerHTML=segs.map((s,i)=>`<div class="h-[32px] flex"><div class="w-[22px] flex items-center justify-center ${s[4]} ${i==3?'bg-gradient-to-b from-[#f4f4f4] to-[#dedede] border-y border-[#d0d0d0] rounded-l':''}">${i+1}</div><div class="w-[211px] border-2 border-b-0 border-[#a8a8b0] bg-[#d3d3d3] pl-[4px] pt-[3px] font-['Liberation_Sans',sans-serif] text-[12px] whitespace-nowrap">${s[0]}</div><div class="w-[208px] border-t-2 border-r border-[#a8a8b0] pl-[4px] pt-[3px] font-['Liberation_Sans',sans-serif] text-[12px] whitespace-nowrap">${s[1]}</div><div class="w-[37px] ${sc[s[3]]} text-center pt-[16px] font-['Liberation_Sans',sans-serif] text-[10.500px] leading-[12px]">${T(s[2],s[2]=='0%'?14:24)}</div><div class="w-[34px] pl-[8px] pt-[6px] ${i==3?'bg-gradient-to-b from-[#f4f4f4] to-[#dedede] border-y border-[#d0d0d0]':''}"><svg class="w-[19px] h-[17px]"><use href="#bubble"/></svg></div></div>`).join('');

const sg=[['1','101',['Jack fell down and broke his',135,'crown',29],['Jack cayó y rompió su corona',141]],['2','100',['Jack fell down and broke his',135,'crown',29],['Jack cayó y rompió su corona',141,'de la cabeza',61]]];
const cell=a=>a.length>2?`<div>${T(a[0],a[1])}</div><div>${T(a[2],a[3])}</div>`:`<div>${T(a[0],a[1])}</div>`;
document.getElementById('sugg').innerHTML=sg.map((r,i)=>`<div class="${i?'text-black':'text-white'} h-[29px] flex leading-[13px]"><div class="w-[40px] border-r border-b border-[#a0a0a0] bg-[#fafcfe] flex items-center justify-end pr-[6px] text-black ${i?'':'border-l-2 border-l-[#dce8f4]'}">${i?'':'<svg class="w-[5px] h-[9px] mr-[16px]" viewBox="0 0 5 9"><path d="M0 0l5 4.500L0 9z" fill="#333"/></svg>'}${r[0]}</div><div class="w-[100px] border-r border-b border-[#a0a0a0] flex items-center pl-[3px] ${i?'':'bg-[#3399ff]'}">${T(r[1],17)}</div><div class="w-[149px] border-r border-b border-[#a0a0a0] flex flex-col justify-center pl-[3px] ${i?'':'bg-[#3399ff]'}">${cell(r[2])}</div><div class="w-[149px] border-r border-b border-[#a0a0a0] flex flex-col justify-center pl-[3px] ${i?'':'bg-[#3399ff]'}">${cell(r[3])}</div><div class="grow border-b border-[#a0a0a0] flex items-center pl-[3px] ${i?'':'bg-[#3399ff]'}">${T('KateTM',37)}</div></div>`).join('');

// letter-spacing is derived from each label's stated width;
// repeated as styles and fonts settle, since both change the natural width
const labels=[...document.querySelectorAll('[data-w]')];
function fit(){
  labels.forEach(e=>{e.style.whiteSpace='pre';e.style.letterSpacing='0px';});
  const widths=labels.map(e=>{const r=document.createRange();r.selectNodeContents(e);return r.getBoundingClientRect().width;});
  labels.forEach((e,i)=>{e.style.letterSpacing=((+e.dataset.w-widths[i])/e.textContent.length)+'px';});
}
fit();
addEventListener('load',fit);
document.fonts.ready.then(fit);
document.fonts.addEventListener('loadingdone',fit);
new MutationObserver(fit).observe(document.head,{childList:true,subtree:true,characterData:true});
let frames=0;
(function tick(){fit();if(++frames<20)requestAnimationFrame(tick);})();
[30,100,250,500].forEach(t=>setTimeout(fit,t));
</script>
</body>
</html>
